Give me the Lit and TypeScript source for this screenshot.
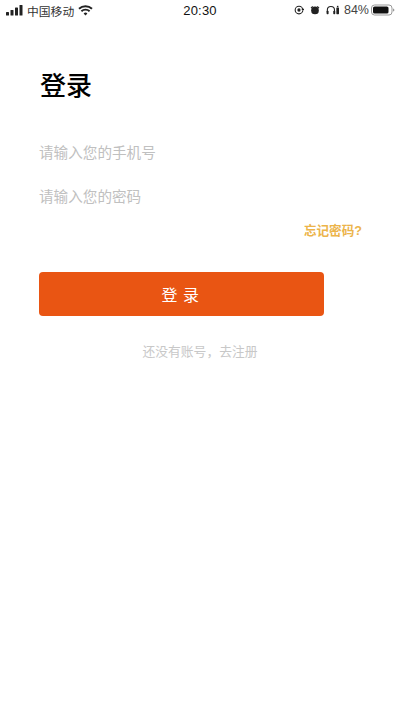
import { LitElement, html, css } from "lit";
import { customElement } from "lit/decorators.js";

@customElement("app-root")
export class AppRoot extends LitElement {
  static styles = css`
    :host {
      display: block;
      width: 400px;
      height: 710px;
      background: #fff;
      overflow: hidden;
      font-family: "Liberation Sans", "Noto Sans CJK SC", sans-serif;
    }
    .status {
      display: flex;
      align-items: center;
      height: 20px;
      padding: 0 5px 0 6px;
      color: #222;
      position: relative;
    }
    .left { display: flex; align-items: center; gap: 4px; font-size: 11.8px; color: #333; }
    .time {
      position: absolute;
      left: 0;
      right: 0;
      text-align: center;
      font-size: 13px;
      font-weight: 500;
      color: #111;
      letter-spacing: 0.2px;
    }
    .right { margin-left: auto; display: flex; align-items: center; font-size: 12.5px; color: #444; }
    .alarm { margin-left: 6px; }
    .phones { margin-left: 6px; }
    .pct { margin-left: 4px; }
    .batt { margin-left: 2px; }
    .main { padding: 0 39px; display: flex; flex-direction: column; }
    h1 {
      margin: 46px 0 0 1px;
      font-size: 26px;
      line-height: 40px;
      font-weight: 500;
      color: #000;
    }
    .field {
      font-size: 14.6px;
      line-height: 20px;
      color: #c0c0c0;
    }
    .f1 { margin-top: 37px; }
    .f2 { margin-top: 24px; }
    .forgot {
      margin: 15px -1px 0 0;
      align-self: flex-end;
      font-size: 12.6px;
      line-height: 18px;
      font-weight: 700;
      color: #ecb44a;
    }
    .btn {
      margin-top: 32px;
      width: 285px;
      height: 44px;
      background: #e95513;
      border-radius: 4px;
      color: #fff;
      font-size: 16px;
      letter-spacing: 5.5px;
      display: flex;
      align-items: center;
      justify-content: center;
      box-sizing: border-box;
      padding-left: 3px;
    }
    .reg {
      margin-top: 27px;
      text-align: center;
      font-size: 12.8px;
      line-height: 18px;
      color: #c8c8c8;
    }
    svg { display: block; }
  `;

  render() {
    return html`
      <div class="status">
        <div class="left">
          <svg width="17" height="12" viewBox="0 0 17 12" fill="#222">
            <rect x="0" y="8" width="3" height="3.5" rx=".6"/>
            <rect x="4.5" y="6" width="3" height="5.5" rx=".6"/>
            <rect x="9" y="3.5" width="3" height="8" rx=".6"/>
            <rect x="13.5" y="1" width="3" height="10.5" rx=".6"/>
          </svg>
          <span>中国移动</span>
          <svg width="15" height="11" viewBox="0 0 15 11" fill="none" stroke="#222" stroke-width="1.9">
            <path d="M1 3.8a9.4 9.4 0 0 1 13 0"/>
            <path d="M3.4 6.2a6 6 0 0 1 8.2 0"/>
            <path d="M7.5 10.6 5.6 8.4a2.8 2.8 0 0 1 3.8 0z" fill="#222" stroke="none"/>
          </svg>
        </div>
        <div class="time">20:30</div>
        <div class="right">
          <svg width="10" height="10" viewBox="0 0 12 12" fill="none" stroke="#222" stroke-width="1.3">
            <circle cx="6" cy="6" r="4.6"/>
            <circle cx="6" cy="6" r="2" fill="#222" stroke="none"/>
            <path d="M8 6h4" stroke="#fff" stroke-width="1.2"/>
            <path d="M8.6 4.6 10.6 7l2-2.4z" fill="#222" stroke="none"/>
          </svg>
          <svg class="alarm" width="10" height="10" viewBox="0 0 13 12" fill="#222">
            <circle cx="6.5" cy="6.5" r="5"/>
            <path d="M.8 3 3 .8l1 1L1.8 4zM12.2 3 10 .8l-1 1L11.2 4z"/>
          </svg>
          <svg class="phones" width="14" height="10" viewBox="0 0 16 12" fill="none">
            <path d="M1.2 9V6a4.3 4.3 0 0 1 8.6 0v3" stroke="#222" stroke-width="1.3"/>
            <rect x=".3" y="7" width="2.4" height="4" rx=".8" fill="#222"/>
            <rect x="8.3" y="7" width="2.4" height="4" rx=".8" fill="#222"/>
            <rect x="12" y="3" width="3.2" height="8" rx=".7" fill="#222"/>
            <rect x="12.7" y="1" width="1.8" height="1.6" fill="#222"/>
          </svg>
          <span class="pct">84%</span>
          <svg class="batt" width="24" height="12" viewBox="0 0 24 12" fill="none">
            <rect x=".5" y="1" width="20.5" height="10" rx="3" stroke="#999"/>
            <rect x="2" y="2.5" width="15.5" height="7" rx="1.6" fill="#111"/>
            <path d="M22 4.4c.9.3 1.4.9 1.4 1.6s-.5 1.3-1.4 1.6z" fill="#999"/>
          </svg>
        </div>
      </div>
      <div class="main">
        <h1>登录</h1>
        <div class="field f1">请输入您的手机号</div>
        <div class="field f2">请输入您的密码</div>
        <div class="forgot">忘记密码?</div>
        <div class="btn">登录</div>
        <div class="reg">还没有账号，去注册</div>
      </div>
    `;
  }
}
